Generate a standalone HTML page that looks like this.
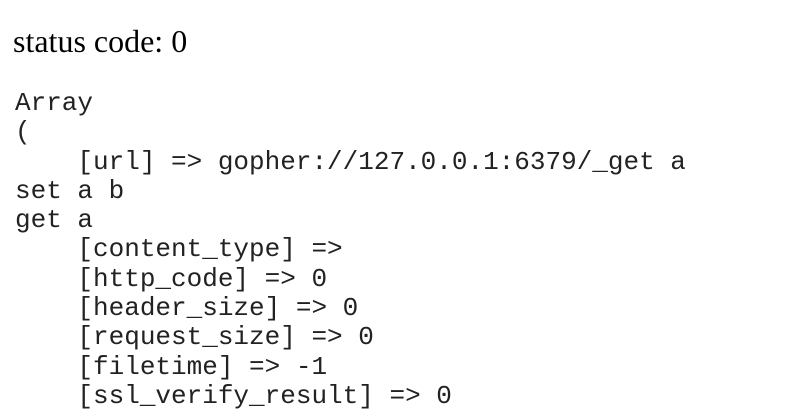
<!DOCTYPE html>
<html><head><meta charset="utf-8"><style>
html,body{margin:0;padding:0;background:#fff;width:788px;height:418px;overflow:hidden}
.h{position:absolute;left:13px;top:23px;font:32px "Liberation Serif",serif;color:#000;white-space:nowrap}
pre{position:absolute;left:15px;top:89px;margin:0;font:26px/29.3px "Liberation Mono",monospace;color:#222}
</style></head><body>
<div class="h">status code: 0</div>
<pre>Array
(
    [url] =&gt; gopher://127.0.0.1:6379/_get a
set a b
get a
    [content_type] =&gt; 
    [http_code] =&gt; 0
    [header_size] =&gt; 0
    [request_size] =&gt; 0
    [filetime] =&gt; -1
    [ssl_verify_result] =&gt; 0</pre>
</body></html>
